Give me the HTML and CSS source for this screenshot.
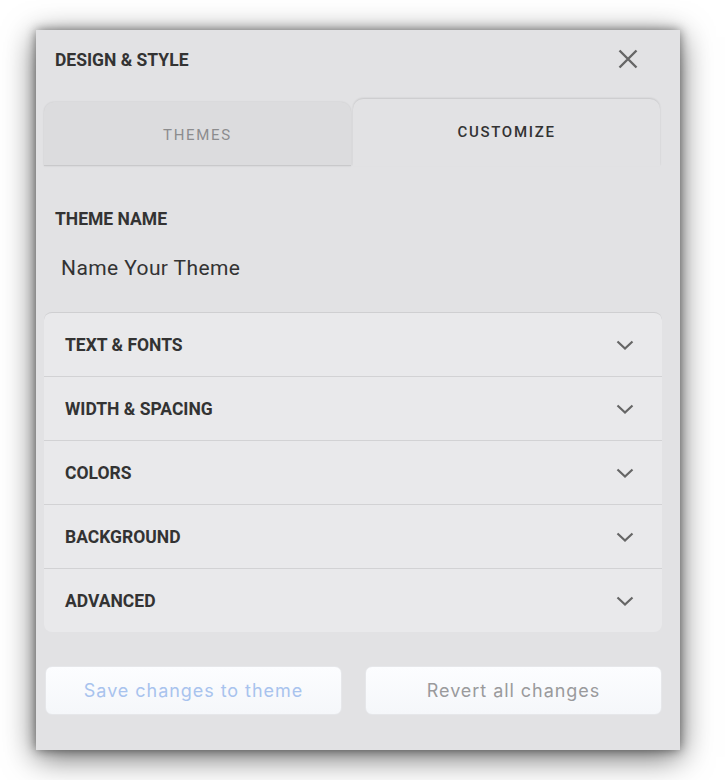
FILE: index.html
```html
<!DOCTYPE html>
<html>
<head>
<meta charset="utf-8">
<link rel="stylesheet" href="styles.css">
</head>
<body>
<div class="panel">
  <div class="header">
    <div class="title">DESIGN &amp; STYLE</div>
    <svg class="close" width="20" height="20" viewBox="0 0 20 20"><path d="M1.5 1.5 L18.5 18.5 M18.5 1.5 L1.5 18.5" stroke="#666" stroke-width="2.4" fill="none"/></svg>
  </div>
  <div class="tabs">
    <div class="tab tab-inactive">THEMES</div>
    <div class="tab tab-active">CUSTOMIZE</div>
  </div>
  <div class="field">
    <div class="label">THEME NAME</div>
    <div class="input">Name Your Theme</div>
  </div>
  <div class="accordion">
    <div class="row"><span>TEXT &amp; FONTS</span><svg class="chev" width="18" height="10" viewBox="0 0 18 10"><path d="M1.5 1.5 L9 8.5 L16.5 1.5" stroke="#666" stroke-width="2.2" fill="none"/></svg></div>
    <div class="row"><span>WIDTH &amp; SPACING</span><svg class="chev" width="18" height="10" viewBox="0 0 18 10"><path d="M1.5 1.5 L9 8.5 L16.5 1.5" stroke="#666" stroke-width="2.2" fill="none"/></svg></div>
    <div class="row"><span>COLORS</span><svg class="chev" width="18" height="10" viewBox="0 0 18 10"><path d="M1.5 1.5 L9 8.5 L16.5 1.5" stroke="#666" stroke-width="2.2" fill="none"/></svg></div>
    <div class="row"><span>BACKGROUND</span><svg class="chev" width="18" height="10" viewBox="0 0 18 10"><path d="M1.5 1.5 L9 8.5 L16.5 1.5" stroke="#666" stroke-width="2.2" fill="none"/></svg></div>
    <div class="row"><span>ADVANCED</span><svg class="chev" width="18" height="10" viewBox="0 0 18 10"><path d="M1.5 1.5 L9 8.5 L16.5 1.5" stroke="#666" stroke-width="2.2" fill="none"/></svg></div>
  </div>
  <div class="actions">
    <div class="btn btn-save">Save changes to theme</div>
    <div class="btn btn-revert">Revert all changes</div>
  </div>
</div>
</body>
</html>
```
FILE: styles.css
```css
html, body {
  margin: 0;
  padding: 0;
  background: #ffffff;
}
body {
  font-family: Roboto, "Liberation Sans", sans-serif;
  min-height: 780px;
}
.panel {
  margin: 30px 0 0 36px;
  width: 644px;
  height: 720px;
  box-sizing: border-box;
  background: #e2e2e4;
  padding: 0 18px 0 8px;
  box-shadow: 0 7px 30px rgba(0,0,0,0.6), 0 0 10px rgba(0,0,0,0.45);
  display: flex;
  flex-direction: column;
}
.header {
  display: flex;
  align-items: center;
  justify-content: space-between;
  padding: 19px 24px 0 11px;
  height: 20px;
}
.title {
  font-size: 17.5px;
  line-height: 20px;
  font-weight: 700;
  color: #333;
  padding-top: 1px;
}
.close {
  display: block;
}
.tabs {
  display: flex;
  align-items: flex-end;
  gap: 2px;
  margin-top: 30px;
  height: 67px;
  padding-right: 2px;
}
.tab {
  flex: 1;
  display: flex;
  align-items: center;
  justify-content: center;
  box-sizing: border-box;
  border-radius: 10px 10px 0 0;
  font-size: 15px;
  font-weight: 500;
  letter-spacing: 1.7px;
}
.tab-inactive {
  height: 64px;
  background: #dcdcde;
  color: #8c8c8e;
  font-weight: 400;
  border-bottom: 1px solid #c9c9cb;
  box-shadow: 0 0 2px rgba(0,0,0,0.12);
  padding-top: 2px;
}
.tab-active {
  height: 67px;
  background: #e2e2e4;
  color: #333;
  box-shadow: 0 -1px 2px rgba(0,0,0,0.12);
  padding-bottom: 1px;
}
.field {
  padding: 43px 0 0 11px;
}
.label {
  font-size: 17.5px;
  line-height: 20px;
  font-weight: 700;
  color: #333;
}
.input {
  margin-top: 27px;
  padding-left: 6px;
  font-size: 21px;
  line-height: 24px;
  letter-spacing: 0.4px;
  color: #333;
}
.accordion {
  margin-top: 32px;
  background: #e9e9eb;
  border-radius: 8px;
  border-top: 1px solid #cfcfd1;
  overflow: hidden;
}
.row {
  height: 63px;
  display: flex;
  align-items: center;
  justify-content: space-between;
  padding: 0 28px 0 21px;
  font-size: 17.5px;
  font-weight: 700;
  color: #333;
}
.row + .row {
  border-top: 1px solid #d2d2d4;
}
.chev {
  display: block;
}
.actions {
  display: flex;
  gap: 23px;
  margin-top: 34px;
  padding-left: 1px;
}
.btn {
  flex: 1;
  height: 49px;
  box-sizing: border-box;
  border-radius: 7px;
  background: linear-gradient(#fcfdff, #f5f7fa);
  border: 1px solid #e6e7ea;
  display: flex;
  align-items: center;
  justify-content: center;
  font-family: Inter, "Liberation Sans", sans-serif;
  font-size: 18px;
  letter-spacing: 0.95px;
}
.btn-save {
  color: #a8c3ee;
}
.btn-revert {
  color: #9a9a9c;
}
```
